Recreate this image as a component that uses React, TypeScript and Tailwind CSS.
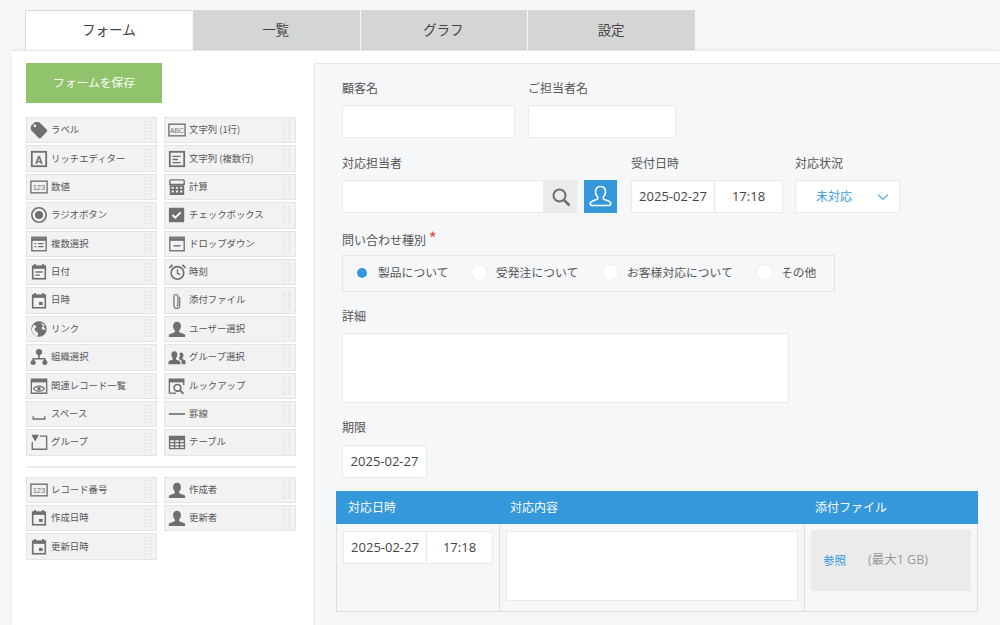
import type { ReactNode } from "react"

const gray = "#6f6f6f"

function Box({ children }: { children: ReactNode }) {
  return (
    <svg width="18" height="18" viewBox="0 0 20 20" fill="none">
      {children}
    </svg>
  )
}

const userPath = "M10 2c2.900 0 4.400 2.200 4.400 5 0 2-.9 3.700-2 4.700v1.500c0 .8 5.600 1.500 6.600 3.200V19H1v-2.600c1-1.700 6.600-2.400 6.600-3.200v-1.500c-1.100-1-2-2.700-2-4.700 0-2.800 1.500-5 4.400-5z"

const icons: Record<string, ReactNode> = {
  tag: <Box><path d="M1 5.500 5.500 1H10l8.500 8.500a2 2 0 0 1 0 2.800l-6.200 6.200a2 2 0 0 1-2.800 0L1 10z" fill={gray} /><circle cx="5.500" cy="5.500" r="1.500" fill="#f2f2f2" /></Box>,
  abc: <Box><rect x="1" y="3.500" width="18" height="13" stroke={gray} strokeWidth="1.500" /><text x="10" y="13.500" fontSize="7.500" textAnchor="middle" fill={gray} fontFamily="Liberation Sans">ABC</text></Box>,
  rich: <Box><rect x="2" y="2" width="16" height="16" stroke={gray} strokeWidth="2" /><text x="10" y="15" fontSize="12" fontWeight="700" textAnchor="middle" fill={gray} fontFamily="Liberation Sans">A</text></Box>,
  lines: <Box><rect x="2" y="2" width="16" height="16" stroke={gray} strokeWidth="2" /><path d="M5 7h9M5 10.500h6M5 14h9" stroke={gray} strokeWidth="1.500" /></Box>,
  num: <Box><rect x="1" y="3.500" width="18" height="13" stroke={gray} strokeWidth="1.500" /><text x="10" y="13.500" fontSize="8.500" textAnchor="middle" fill={gray} fontFamily="Liberation Sans">123</text></Box>,
  calc: <Box><path d="M3 2h14a1 1 0 0 1 1 1v4H2V3a1 1 0 0 1 1-1z" stroke={gray} strokeWidth="1.500" /><path fillRule="evenodd" d="M2 8h16v11H2z M4 10v2h2.500v-2z M8.700 10v2h2.600v-2z M13.500 10v2H16v-2z M4 14v2h2.500v-2z M8.700 14v2h2.600v-2z M13.500 14v2H16v-2z" fill={gray} /></Box>,
  radio: <Box><circle cx="10" cy="10" r="8" stroke={gray} strokeWidth="1.800" /><circle cx="10" cy="10" r="4.500" fill={gray} /></Box>,
  check: <Box><rect x="1" y="2" width="17" height="16" rx="1" fill={gray} /><path d="m5 10 3.200 3 5.800-6" stroke="#fff" strokeWidth="2" /></Box>,
  multi: <Box><rect x="2" y="2.500" width="16" height="15" stroke={gray} strokeWidth="1.500" /><path d="M2 5h16" stroke={gray} strokeWidth="3" /><path d="M5 9.500h2M9 9.500h6M5 13h2M9 13h6" stroke={gray} strokeWidth="1.300" /></Box>,
  drop: <Box><rect x="2" y="2.500" width="16" height="15" stroke={gray} strokeWidth="1.500" /><path d="M2 5h16" stroke={gray} strokeWidth="3" /><path d="M6 12h8" stroke={gray} strokeWidth="1.500" /></Box>,
  date: <Box><path d="M5.500 1v3M14.500 1v3" stroke={gray} strokeWidth="2" /><rect x="3" y="3.500" width="14" height="14" stroke={gray} strokeWidth="1.800" /><path d="M3 5h14" stroke={gray} strokeWidth="3" /><path d="M6 10h8M6 13.500h5" stroke={gray} strokeWidth="1.500" /></Box>,
  datetime: <Box><path d="M5.500 1v3M14.500 1v3" stroke={gray} strokeWidth="2" /><rect x="3" y="3.500" width="14" height="14" stroke={gray} strokeWidth="1.800" /><path d="M3 5h14" stroke={gray} strokeWidth="3" /><rect x="10" y="11" width="4" height="3.500" fill={gray} /></Box>,
  clock: <Box><circle cx="10.500" cy="11" r="7" stroke={gray} strokeWidth="1.800" /><path d="M10.500 7v4.500l3 1.500" stroke={gray} strokeWidth="1.500" /><path d="M1.500 5.500 5 2M19.500 5.500 16 2" stroke={gray} strokeWidth="2" /></Box>,
  clip: <Box><path d="M13 5.500V15a3.200 3.200 0 0 1-6.400 0V5a2.200 2.200 0 0 1 4.400 0v9a1 1 0 0 1-1.500 1" stroke={gray} strokeWidth="1.300" /></Box>,
  globe: <Box><circle cx="10" cy="10" r="8.500" fill={gray} /><path d="M4 5.500c2 0 3 .5 3 2s-2 1.500-2 3 2.500 2 3.500 3.500.5 3-.5 4c-2-.3-5-2.500-5.800-5.500C1.800 10 2.500 7.500 4 5.500zM12 3c2 .5 4 2 4.500 3.500-1.200 1-3 .5-3.500 2s1.500 2 2.500 2.500l1.800-.5" fill="#f2f2f2" /></Box>,
  user: <Box><path d={userPath} fill={gray} /></Box>,
  org: <Box><circle cx="10" cy="4.500" r="3.500" fill={gray} /><circle cx="3.500" cy="16" r="2.800" fill={gray} /><circle cx="16.500" cy="16" r="2.800" fill={gray} /><path d="M10 7v5M3.500 15v-3h13v3" stroke={gray} strokeWidth="1.800" /></Box>,
  group: <Box><path d="M7 3.500c2.300 0 3.400 1.800 3.400 4 0 1.500-.7 2.900-1.500 3.700v1.300c0 .6 4.100 1.300 4.800 2.600V18H.5v-2.900c.7-1.300 4.800-2 4.800-2.600v-1.300C4.500 10.400 3.800 9 3.800 7.500c0-2.200 1-4 3.200-4z" fill={gray} /><path d="M14.500 5c1.800 0 2.700 1.400 2.700 3.200 0 1.200-.5 2.300-1.200 3v1c0 .5 2.800 1 3.500 2.100V18h-4.300v-3.500c-.6-1-1.800-1.600-3-2.100.1-.5.1-.8.1-1.300.7-.8 1-1.800 1-3C12.300 6.500 13 5 14.500 5z" fill={gray} /></Box>,
  related: <Box><path d="M1.500 18V2.500h17V18z" stroke={gray} strokeWidth="1.500" /><path d="M1.500 4.500h17" stroke={gray} strokeWidth="3" /><path d="M4 13c2.500-3.800 9.500-3.800 12 0-2.500 3.800-9.500 3.800-12 0z" stroke={gray} strokeWidth="1.300" /><circle cx="10" cy="13" r="2" fill={gray} /></Box>,
  lookup: <Box><path d="M1.500 18V2.500h16V9" stroke={gray} strokeWidth="1.500" /><path d="M1.500 4.500h16" stroke={gray} strokeWidth="3" /><path d="M1.500 18H9" stroke={gray} strokeWidth="1.500" /><circle cx="10.500" cy="12" r="3.700" stroke={gray} strokeWidth="1.800" /><path d="m13.200 14.700 4 4" stroke={gray} strokeWidth="2.200" /></Box>,
  space: <Box><path d="M3.500 12.500v3h13v-3" stroke={gray} strokeWidth="1.500" /></Box>,
  rule: <Box><path d="M1 10h18" stroke={gray} strokeWidth="1.800" /></Box>,
  folder: <Box><path d="M11 3.500h7.500V18h-16v-8" stroke={gray} strokeWidth="1.500" /><path d="M1.500 2h8.500L5.700 9.500z" fill={gray} /></Box>,
  table: <Box><path fillRule="evenodd" d="M1 3h18v15H1z M2.500 8v2h4v-2z M8 8v2h4v-2z M13.500 8v2h4v-2z M2.500 11.500v2h4v-2z M8 11.500v2h4v-2z M13.500 11.500v2h4v-2z M2.500 15v1.800h4V15z M8 15v1.800h4V15z M13.500 15v1.800h4V15z" fill={gray} /></Box>,
}

function Handle() {
  const dots = []
  for (let y = 1; y < 21; y += 3.3) {
    dots.push(<rect key={`a${y}`} x="0" y={y} width="2.500" height="1.500" fill="#e4e4e4" />)
    dots.push(<rect key={`b${y}`} x="5" y={y} width="2.500" height="1.500" fill="#e4e4e4" />)
  }
  return (
    <svg width="8" height="21" className="ml-auto mr-[4px] shrink-0">
      {dots}
    </svg>
  )
}

function Item({ icon, label }: { icon: string; label: string }) {
  return (
    <div className="h-[26.4px] flex items-center bg-[#f2f2f2] border border-[#e3e4e4] pl-[3px] text-[9.4px] text-[#555]">
      <span className="w-[21px] shrink-0 flex">{icons[icon]}</span>
      <span className="mb-[2px] whitespace-nowrap">{label}</span>
      <Handle />
    </div>
  )
}

const mainItems = [
  ["tag", "ラベル"], ["abc", "文字列 (1行)"],
  ["rich", "リッチエディター"], ["lines", "文字列 (複数行)"],
  ["num", "数値"], ["calc", "計算"],
  ["radio", "ラジオボタン"], ["check", "チェックボックス"],
  ["multi", "複数選択"], ["drop", "ドロップダウン"],
  ["date", "日付"], ["clock", "時刻"],
  ["datetime", "日時"], ["clip", "添付ファイル"],
  ["globe", "リンク"], ["user", "ユーザー選択"],
  ["org", "組織選択"], ["group", "グループ選択"],
  ["related", "関連レコード一覧"], ["lookup", "ルックアップ"],
  ["space", "スペース"], ["rule", "罫線"],
  ["folder", "グループ"], ["table", "テーブル"],
]

const systemItems = [
  ["num", "レコード番号"], ["user", "作成者"],
  ["datetime", "作成日時"], ["user", "更新者"],
  ["datetime", "更新日時"],
]

const tabs = ["フォーム", "一覧", "グラフ", "設定"]

function Label({ children }: { children: ReactNode }) {
  return <div className="h-[17px] leading-[17px] text-xs text-[#555] whitespace-nowrap">{children}</div>
}

const inputCls = "bg-white border border-[#e8ebee] shadow-[inset_0_1px_2px_rgba(0,0,0,0.02)]"
const numFont = "font-['Open_Sans','Noto_Sans_CJK_JP',sans-serif]"

function DateTime({ dateW, timeW }: { dateW: string; timeW: string }) {
  return (
    <div className={`flex h-[33px] text-[13px] text-[#444] ${numFont}`}>
      <div className={`${dateW} ${inputCls} flex items-center justify-center`}>2025-02-27</div>
      <div className={`${timeW} ${inputCls} border-l-0 flex items-center justify-center`}>17:18</div>
    </div>
  )
}

function Radio({ label, checked, cls }: { label: string; checked?: boolean; cls: string }) {
  return (
    <div className={`flex items-center ${cls}`}>
      <span className="w-[17px] h-[17px] rounded-full bg-white border border-[#eceef0] flex items-center justify-center shrink-0">
        {checked && <span className="w-[10px] h-[10px] rounded-full bg-[#3498db]" />}
      </span>
      <span className="ml-[8px] mb-[1px] text-[11.8px] text-[#555] whitespace-nowrap">{label}</span>
    </div>
  )
}

export default function App() {
  return (
    <div className="h-[625px] w-[1000px] overflow-hidden bg-[#f5f7f9] flex flex-col font-['Noto_Sans_CJK_JP',sans-serif]">
      <div className="flex ml-[25px] mt-[10px] h-[40px] shrink-0">
        {tabs.map((t, i) => (
          <div
            key={t}
            className={`w-[166.75px] mr-[1px] pb-[3px] flex items-center justify-center text-[13.5px] text-[#444] border-t border-[#d8d9d9] ${
              i === 0 ? "bg-white border-l border-r-0" : "bg-[#d4d6d6] border-r"
            }`}
          >
            {t}
          </div>
        ))}
      </div>

      <div className="flex-1 ml-[12px] bg-white border-t border-[#e6e8ea] flex min-h-0 shadow-[0_0_4px_rgba(0,0,0,0.05)]">
        {/* palette */}
        <div className="w-[302px] shrink-0 pl-[14px] pt-[12px]">
          <div className="w-[136px] h-[40px] pb-[2px] bg-[#91c36c] text-white text-[11.8px] flex items-center justify-center">
            フォームを保存
          </div>
          <div className="mt-[14px] w-[270px] grid grid-cols-[131px_132px] gap-x-[7px] gap-y-[2px]">
            {mainItems.map(([icon, label]) => (
              <Item key={label + icon} icon={icon} label={label} />
            ))}
          </div>
          <div className="w-[270px] h-[2px] bg-[#eceded] mt-[10px] mb-[9px]" />
          <div className="w-[270px] grid grid-cols-[131px_132px] gap-x-[7px] gap-y-[2px]">
            {systemItems.map(([icon, label]) => (
              <Item key={label} icon={icon} label={label} />
            ))}
          </div>
        </div>

        {/* form canvas */}
        <div className="flex-1 mt-[12px] bg-[#f5f7f9] border-l border-t border-[#e3e6e8] pl-[27px] pt-[15px] min-w-0">
          <div className="flex gap-[13px]">
            <div className="w-[173px]">
              <Label>顧客名</Label>
              <div className={`h-[33px] mt-[9px] ${inputCls}`} />
            </div>
            <div className="w-[148px]">
              <Label>ご担当者名</Label>
              <div className={`h-[33px] mt-[9px] ${inputCls}`} />
            </div>
          </div>

          <div className="flex mt-[16px]">
            <div className="w-[275px]">
              <Label>対応担当者</Label>
              <div className="flex mt-[9px] h-[33px]">
                <div className={`w-[202px] ${inputCls}`} />
                <div className="w-[33px] bg-[#ebebeb] flex items-center justify-center">
                  <svg width="20" height="20" viewBox="0 0 20 20" fill="none">
                    <circle cx="8.500" cy="8.500" r="6" stroke="#6f6f6f" strokeWidth="2" />
                    <path d="m13 13 5.500 5.500" stroke="#6f6f6f" strokeWidth="2.500" />
                  </svg>
                </div>
                <div className="w-[33px] ml-[7px] bg-[#3498db] flex items-center justify-center">
                  <svg width="25" height="25" viewBox="0 0 25 25" fill="none">
                    <path
                      d="M12.500 2.500c3.300 0 5 2.500 5 5.500 0 2.300-1 4-2.200 5.200v1.600c0 1 6.700 1.800 7.400 4.200.3 1-.3 2.500-1.700 2.500H4c-1.400 0-2-1.500-1.700-2.500.7-2.400 7.400-3.200 7.400-4.200v-1.600C8.500 12 7.500 10.300 7.500 8c0-3 1.700-5.500 5-5.500z"
                      stroke="#fff"
                      strokeWidth="1.600"
                    />
                  </svg>
                </div>
              </div>
            </div>
            <div className="w-[164px] ml-[14px]">
              <Label>受付日時</Label>
              <div className="mt-[9px]">
                <DateTime dateW="w-[84px]" timeW="w-[68px]" />
              </div>
            </div>
            <div className="w-[105px]">
              <Label>対応状況</Label>
              <div className={`mt-[9px] h-[33px] ${inputCls} flex items-center text-xs text-[#3498db]`}>
                <span className="ml-[20px] mb-[1px]">未対応</span>
                <svg width="12" height="8" viewBox="0 0 12 8" fill="none" className="ml-auto mr-[10px]">
                  <path d="m1 1.500 5 5 5-5" stroke="#5aaee5" strokeWidth="1.200" />
                </svg>
              </div>
            </div>
          </div>

          <div className="mt-[16px]">
            <Label>
              問い合わせ種別 <span className="text-[#e74c3c] text-[17px] leading-none">*</span>
            </Label>
            <div className="mt-[9px] w-[493px] h-[37px] pb-[2px] border border-[#e3e6e8] flex items-center pl-[10px]">
              <Radio label="製品について" checked cls="w-[118px]" />
              <Radio label="受発注について" cls="w-[131px]" />
              <Radio label="お客様対応について" cls="w-[154px]" />
              <Radio label="その他" cls="" />
            </div>
          </div>

          <div className="mt-[15px]">
            <Label>詳細</Label>
            <div className={`mt-[9px] w-[447px] h-[70px] ${inputCls}`} />
          </div>

          <div className="mt-[15px]">
            <Label>期限</Label>
            <div className={`mt-[10px] w-[85px] h-[33px] ${inputCls} flex items-center justify-center text-[13px] text-[#444] ${numFont}`}>
              2025-02-27
            </div>
          </div>

          <div className="mt-[13px] -ml-[6px] w-[642px]">
            <div className="grid grid-cols-[163px_305px_174px] h-[33px] bg-[#3498db] text-white text-xs">
              <div className="flex items-center pl-[12px] pb-[1px]">対応日時</div>
              <div className="flex items-center pl-[11px] pb-[1px]">対応内容</div>
              <div className="flex items-center pl-[11px] pb-[1px]">添付ファイル</div>
            </div>
            <div className="grid grid-cols-[163px_305px_174px] h-[88px] border-x border-b border-[#dcdfe2]">
              <div className="border-r border-[#dcdfe2] pl-[6px] pt-[7px]">
                <DateTime dateW="w-[84px]" timeW="w-[66px]" />
              </div>
              <div className="border-r border-[#dcdfe2] pl-[6px] pt-[7px]">
                <div className={`w-[292px] h-[70px] ${inputCls}`} />
              </div>
              <div className="pl-[6px] pt-[6px]">
                <div className="w-[160px] h-[61px] bg-[#ebebeb] flex items-center pl-[12px] text-[11.5px]">
                  <span className="text-[#3498db]">参照</span>
                  <span className={`ml-[22px] text-[12.5px] text-[#999] ${numFont}`}>(最大1 GB)</span>
                </div>
              </div>
            </div>
          </div>
        </div>
      </div>
    </div>
  )
}
